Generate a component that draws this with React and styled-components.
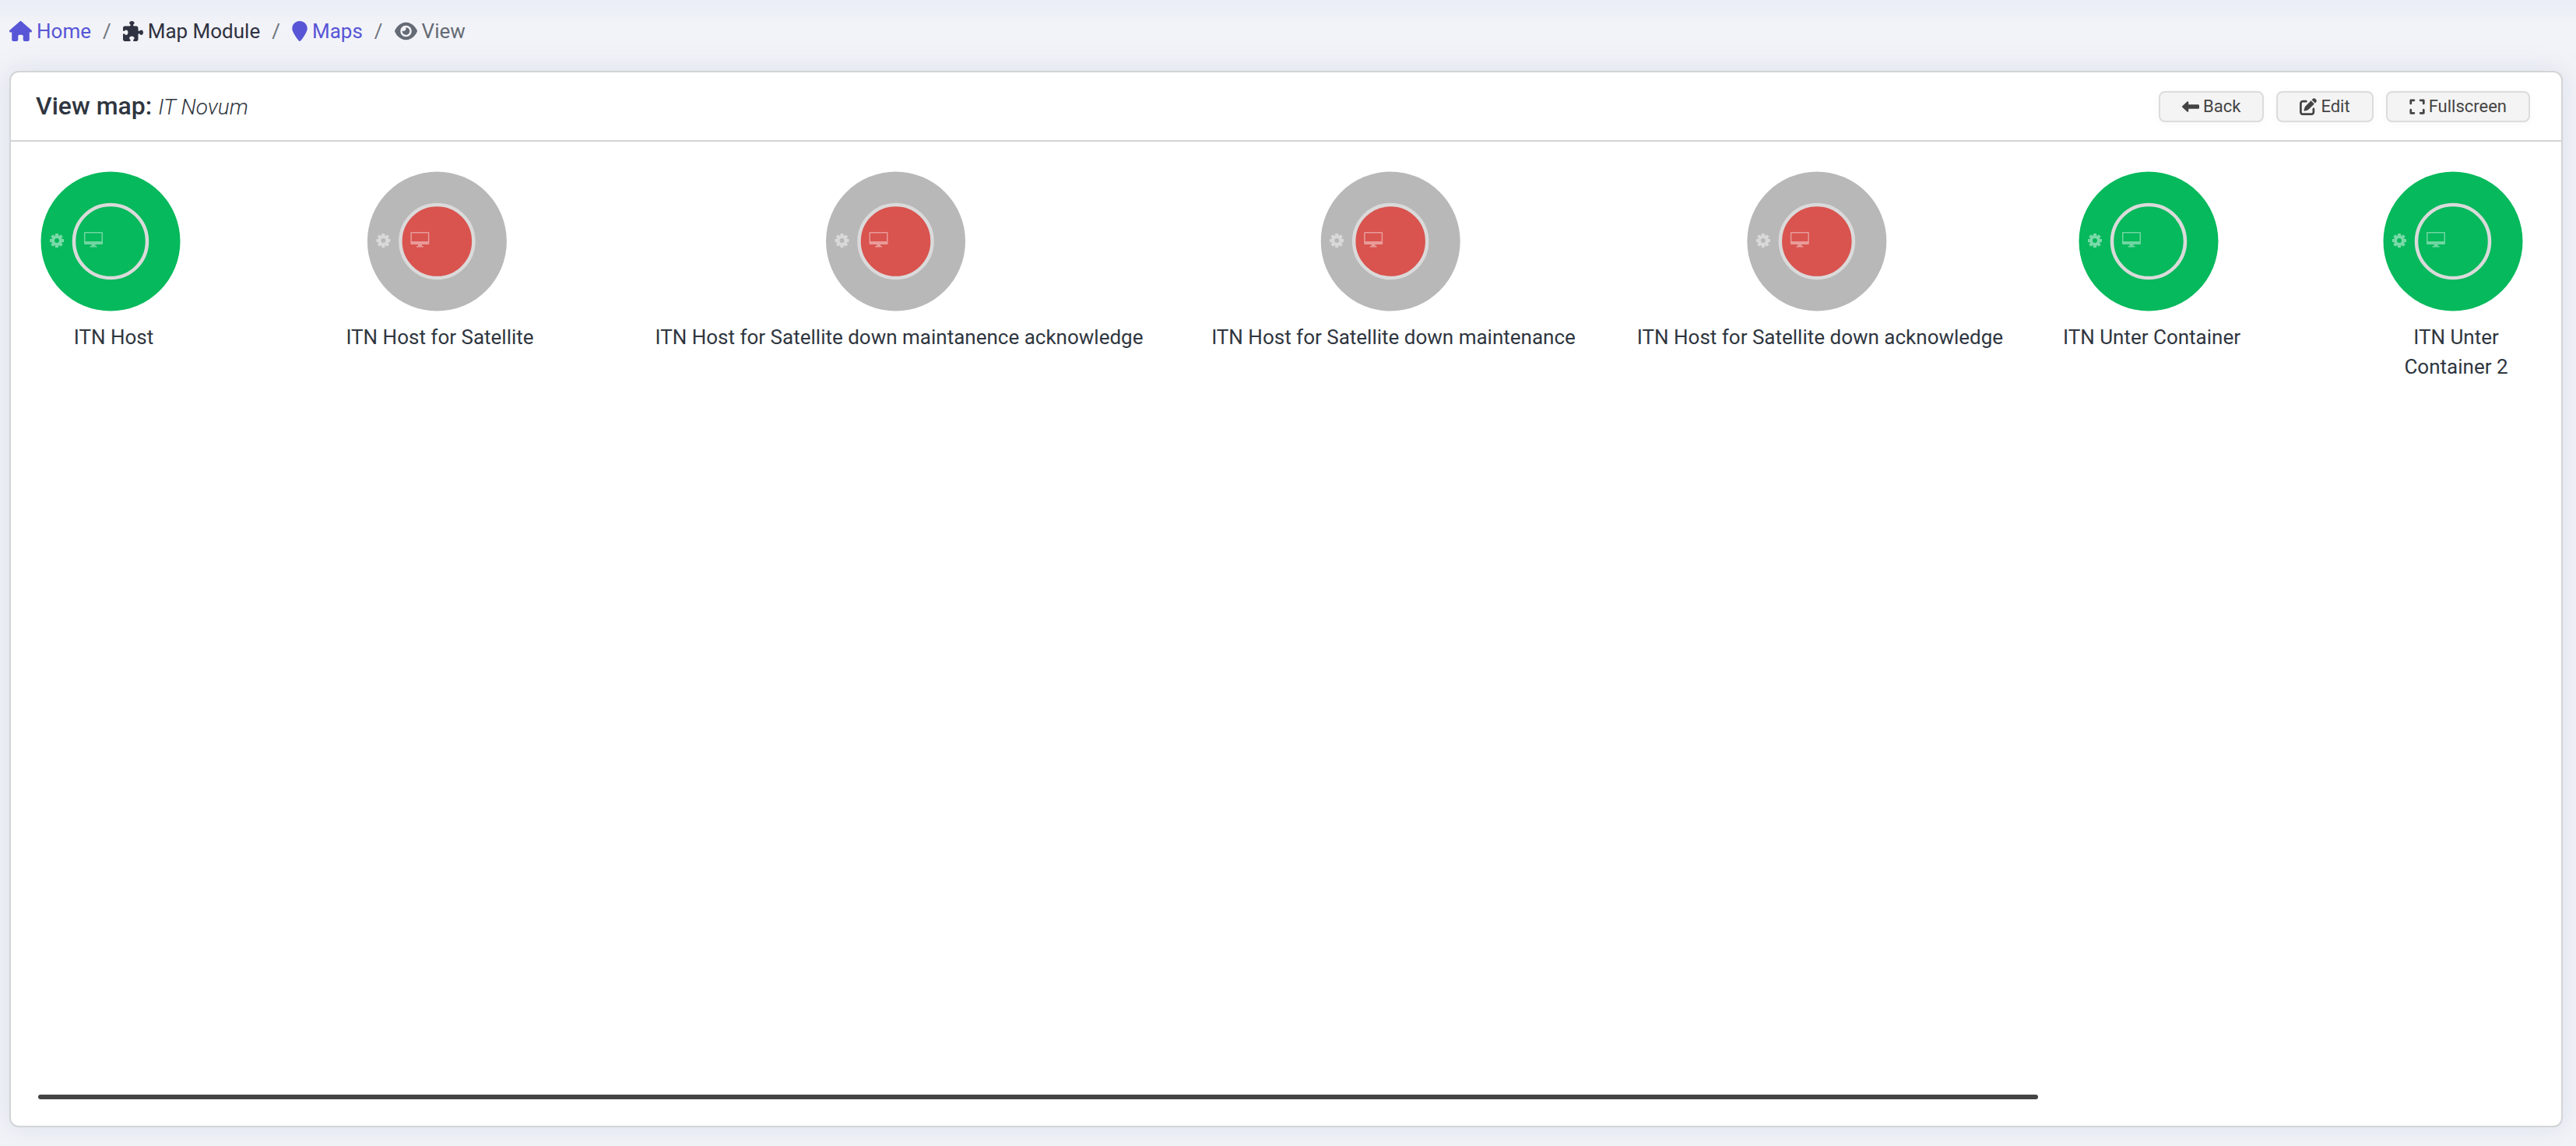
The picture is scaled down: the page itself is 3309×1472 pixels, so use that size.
import React from "react";
import styled, { createGlobalStyle, css } from "styled-components";
import {
  FaHouse,
  FaPuzzlePiece,
  FaLocationPin,
  FaEye,
  FaLeftLong,
  FaPenToSquare,
  FaExpand,
} from "react-icons/fa6";

const GlobalStyle = createGlobalStyle`
  *, *::before, *::after { box-sizing: border-box; }
  body {
    margin: 0;
    background: #f2f3f8;
    color: #2f3640;
    font-family: Roboto, "Liberation Sans", sans-serif;
    font-size: 26px;
    line-height: 38px;
  }
`;

const Page = styled.div`
  display: flex;
  flex-direction: column;
  min-height: 100vh;
  padding: 21px 17px 24px 12px;
  background: linear-gradient(#e9edf6, #f2f3f8 32px);
`;

const Breadcrumb = styled.ol`
  display: flex;
  align-items: center;
  gap: 15px;
  margin: 0 0 32px;
  padding: 0;
  list-style: none;
`;

const Crumb = styled.li`
  display: flex;
  align-items: center;
  gap: 15px;
  color: ${(p) => (p.$muted ? "#656b75" : "#2f3240")};

  &:not(:first-child)::before {
    content: "/";
    color: #6f747c;
  }
`;

const crumbContent = css`
  display: flex;
  align-items: center;
  gap: 6px;

  svg {
    width: ${(p) => p.$iconWidth}px;
    height: 26px;
  }
`;

const CrumbText = styled.span`
  ${crumbContent}
`;

const CrumbLink = styled.a`
  ${crumbContent}
  color: #5856d6;
  text-decoration: none;
`;

const Card = styled.main`
  display: flex;
  flex: 1;
  flex-direction: column;
  min-width: 0;
  border: 2px solid #d2d4d6;
  border-radius: 12px;
  background: #fff;
  box-shadow: 0 0 32px rgba(130, 155, 185, 0.22);
`;

const CardHeader = styled.header`
  display: flex;
  align-items: flex-start;
  justify-content: space-between;
  padding: 24px 40px 23px 32px;
  border-bottom: 2px solid #d2d4d6;
`;

const Title = styled.h1`
  margin: 0;
  font-size: 32px;
  font-weight: 500;
  line-height: 38px;
`;

const MapName = styled.em`
  font-size: 28px;
  font-weight: 300;
  line-height: 28px;
`;

const Toolbar = styled.div`
  display: flex;
  gap: 16px;
`;

const Button = styled.button`
  display: flex;
  align-items: center;
  gap: 5px;
  height: 40px;
  padding: 0 28px;
  border: 2px solid #dcdcdc;
  border-radius: 8px;
  background: #f4f4f4;
  box-shadow: 0 2px 12px rgba(0, 0, 0, 0.03);
  color: #444;
  font-family: inherit;
  font-size: 22px;
  line-height: 32px;

  svg {
    width: ${(p) => p.$iconWidth || 22}px;
    height: 22px;
  }
`;

const CardBody = styled.div`
  display: flex;
  flex: 1;
  flex-direction: column;
  padding: 38px 30px 34px 35px;
`;

const MapCanvas = styled.section`
  position: relative;
  flex: 1;
`;

const MapItem = styled.figure`
  position: absolute;
  top: 0;
  display: flex;
  flex-direction: column;
  align-items: center;
  width: max-content;
  max-width: ${(p) => (p.$narrow ? "180px" : "none")};
  margin: 0;
  transform: translateX(-50%);
`;

const StatusIcon = styled.svg`
  width: 180px;
  height: 180px;
  margin-right: 8px;
`;

const Label = styled.figcaption`
  margin-top: 14px;
  text-align: center;
`;

const ScrollTrack = styled.div`
  height: 6px;
`;

const ScrollThumb = styled.div`
  width: 80%;
  height: 6px;
  border-radius: 3px;
  background: #444;
`;

const ITEMS = [
  { x: 97, label: "ITN Host", up: true },
  { x: 516, label: "ITN Host for Satellite" },
  { x: 1106, label: "ITN Host for Satellite down maintanence acknowledge" },
  { x: 1741, label: "ITN Host for Satellite down maintenance" },
  { x: 2289, label: "ITN Host for Satellite down acknowledge" },
  { x: 2715, label: "ITN Unter Container", up: true },
  { x: 3106, label: "ITN Unter Container 2", up: true, narrow: true },
];

const TEETH = [0, 45, 90, 135, 180, 225, 270, 315];

function HostStatus({ up }) {
  return (
    <StatusIcon viewBox="0 0 180 180" aria-hidden="true">
      <circle cx="90" cy="90" r="89.5" fill={up ? "#06b95c" : "#b8b8b8"} />
      <circle
        cx="90"
        cy="90"
        r="47"
        fill={up ? "#06b95c" : "#d9534f"}
        stroke="#dadada"
        strokeWidth="4.5"
      />
      <g fill="#fff" stroke="#fff" opacity="0.47">
        <circle cx="21" cy="89" r="5" fill="none" strokeWidth="4" />
        {TEETH.map((angle) => (
          <rect
            key={angle}
            x="19"
            y="80"
            width="4"
            height="2.5"
            stroke="none"
            transform={`rotate(${angle} 21 89)`}
          />
        ))}
      </g>
      <g fill="#fff" opacity="0.42">
        <path
          fillRule="evenodd"
          d="M57 78h22a1 1 0 0 1 1 1v14a1 1 0 0 1-1 1h-22a1 1 0 0 1-1-1v-14a1 1 0 0 1 1-1zM57.5 79.5v10.500h21v-10.500z"
        />
        <path d="M65.500 94h5v2h2v1.500h-9v-1.500h2z" />
      </g>
    </StatusIcon>
  );
}

export default function App() {
  return (
    <>
      <GlobalStyle />
      <Page>
        <nav aria-label="Breadcrumb">
          <Breadcrumb>
            <Crumb>
              <CrumbLink href="#home" $iconWidth={29}>
                <FaHouse />
                Home
              </CrumbLink>
            </Crumb>
            <Crumb>
              <CrumbText $iconWidth={26}>
                <FaPuzzlePiece />
                Map Module
              </CrumbText>
            </Crumb>
            <Crumb>
              <CrumbLink href="#maps" $iconWidth={20}>
                <FaLocationPin />
                Maps
              </CrumbLink>
            </Crumb>
            <Crumb $muted>
              <CrumbText aria-current="page" $iconWidth={29}>
                <FaEye />
                View
              </CrumbText>
            </Crumb>
          </Breadcrumb>
        </nav>
        <Card>
          <CardHeader>
            <Title>
              View map: <MapName>IT Novum</MapName>
            </Title>
            <Toolbar>
              <Button type="button">
                <FaLeftLong />
                Back
              </Button>
              <Button type="button">
                <FaPenToSquare />
                Edit
              </Button>
              <Button type="button" $iconWidth={20}>
                <FaExpand />
                Fullscreen
              </Button>
            </Toolbar>
          </CardHeader>
          <CardBody>
            <MapCanvas aria-label="IT Novum">
              {ITEMS.map((item) => (
                <MapItem
                  key={item.label}
                  $narrow={item.narrow}
                  style={{ left: item.x }}
                >
                  <HostStatus up={item.up} />
                  <Label>{item.label}</Label>
                </MapItem>
              ))}
            </MapCanvas>
            <ScrollTrack>
              <ScrollThumb />
            </ScrollTrack>
          </CardBody>
        </Card>
      </Page>
    </>
  );
}
